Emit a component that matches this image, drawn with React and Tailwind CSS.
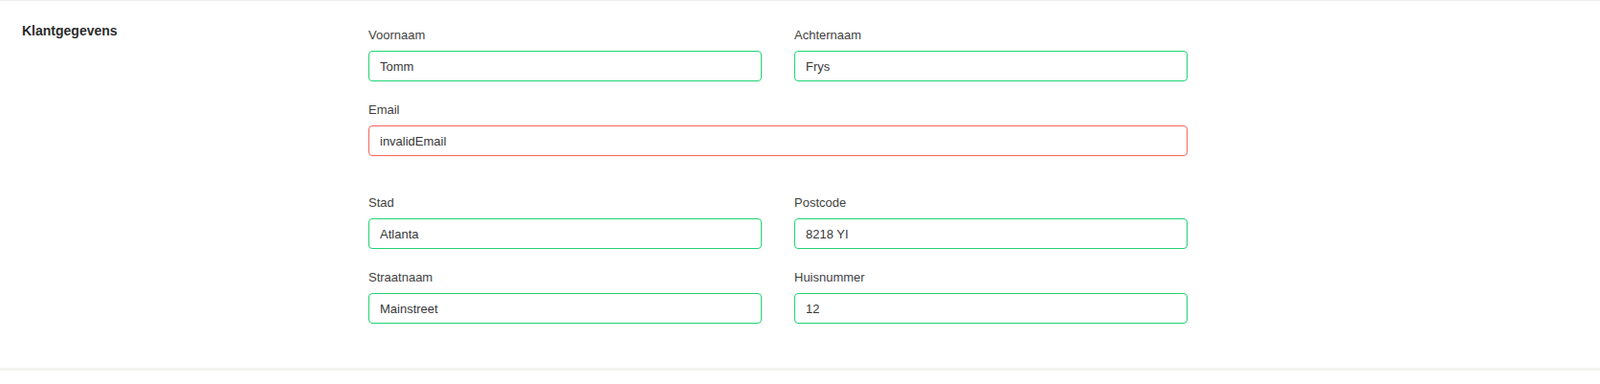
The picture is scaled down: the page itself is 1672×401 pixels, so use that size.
import React from "react";

const fields = [
  { label: "Voornaam", value: "Tomm" },
  { label: "Achternaam", value: "Frys" },
];

function Field({ label, value, invalid, wide }) {
  return (
    <div className={wide ? "col-span-2" : ""}>
      <label className="block text-[13px] leading-5 text-[#3f3f3f] mb-[6px]">{label}</label>
      <input
        defaultValue={value}
        className={`block w-full h-[32px] rounded-[4px] border px-[11px] text-[13px] text-[#383838] outline-none bg-white ${
          invalid ? "border-[#f4665c]" : "border-[#1fd373]"
        }`}
      />
    </div>
  );
}

export default function App() {
  return (
    <div className="min-h-[401px] bg-white font-['Liberation_Sans',Arial,sans-serif]">
      <section className="border-t border-[#efefef] border-b-[3px] border-b-[#f3f3f2] flex px-[23px] pt-[19px] pb-[46px]">
        <h2 className="w-[362px] shrink-0 mt-[2px] text-[14px] font-bold leading-5 text-[#2b2b2b]">Klantgegevens</h2>

        <div className="w-[856px] pt-[7px]">
          <div className="grid grid-cols-2 gap-x-[34px] gap-y-[20px]">
            {fields.map((f) => (
              <Field key={f.label} {...f} />
            ))}
            <Field label="Email" value="invalidEmail" invalid wide />
          </div>

          <div className="grid grid-cols-2 gap-x-[34px] gap-y-[20px] mt-[39px]">
            <Field label="Stad" value="Atlanta" />
            <Field label="Postcode" value="8218 YI" />
            <Field label="Straatnaam" value="Mainstreet" />
            <Field label="Huisnummer" value="12" />
          </div>
        </div>
      </section>
    </div>
  );
}
